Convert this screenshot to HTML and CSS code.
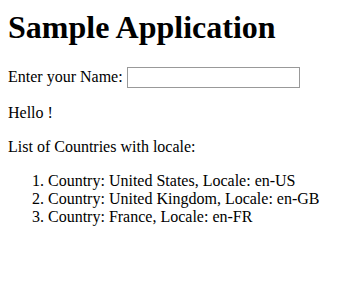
FILE: index.html
```html
<!DOCTYPE html>
<html>
<head>
<meta charset="utf-8">
<link rel="stylesheet" href="styles.css">
</head>
<body class="page">
<h1 class="title">Sample Application</h1>
<div class="row">Enter your Name: <input class="name-input" type="text"></div>
<p class="greeting">Hello !</p>
<p class="intro">List of Countries with locale:</p>
<ol class="countries">
<li>Country: United States, Locale: en-US</li>
<li>Country: United Kingdom, Locale: en-GB</li>
<li>Country: France, Locale: en-FR</li>
</ol>
</body>
</html>
```
FILE: styles.css
```css
.page {
  margin: 8px;
  font-family: "Liberation Serif", "Times New Roman", serif;
  font-size: 16px;
  color: #000;
  background: #fff;
}
.title {
  font-size: 32px;
  font-weight: bold;
  margin: 1px 0 21px;
}
.name-input {
  width: 167px;
  height: 17px;
  padding: 1px 2px;
  border: 1px solid #999;
  font-family: inherit;
}
.greeting, .intro {
  margin: 16px 0;
}
.countries {
  margin: 16px 0;
  padding-left: 40px;
}
```
